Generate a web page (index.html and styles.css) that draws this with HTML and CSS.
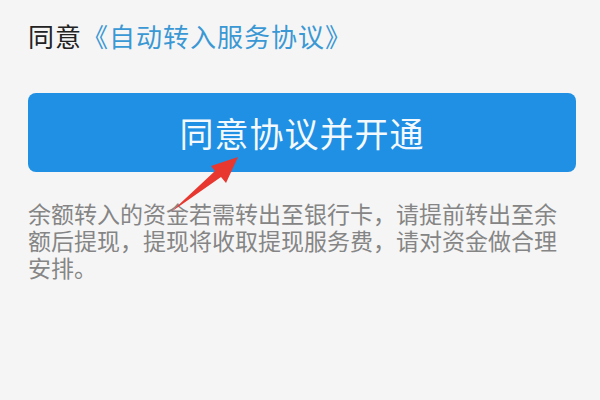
FILE: index.html
```html
<!DOCTYPE html>
<html lang="zh-CN">
<head>
  <meta charset="UTF-8" />
  <title>开通余额转入</title>
  <link rel="stylesheet" href="styles.css">
</head>
<body>

<div class="page">
  <p class="agree">同意<a class="agree-link" href="#">《自动转入服务协议》</a></p>

  <div class="confirm-wrap">
    <button class="confirm">同意协议并开通</button>
    <!-- red pointer onto the button -->
    <svg class="pointer" width="80" height="70" viewBox="160 150 80 70">
      <polygon points="171,212 215,171 211,166 238,157 226,183 221,177" fill="#e8372f" />
    </svg>
  </div>

  <p class="notice">余额转入的资金若需转出至银行卡，请提前转出至余额后提现，提现将收取提现服务费，请对资金做合理安排。</p>
</div>

</body>
</html>
```

FILE: styles.css
```css
* {
  box-sizing: border-box;
}
body {
  margin: 0;
  background-color: #f5f5f5;
  font-family: "Noto Sans CJK SC", "Noto Sans", sans-serif;
  width: 600px;
  height: 400px;
  overflow: hidden;
}
.page {
  padding: 0 24px 0 28px;
}
.agree {
  margin: 0;
  padding-top: 17px;
  font-size: 26px;
  line-height: 38px;
  letter-spacing: 1px;
  color: #222;
}
.agree-link {
  color: #3a98d4;
  text-decoration: none;
}
.confirm-wrap {
  position: relative;
  margin-top: 38px;
}
.confirm {
  display: block;
  width: 100%;
  height: 79px;
  border: none;
  border-radius: 8px;
  background-color: #1f90e3;
  color: #f4f9fd;
  font-family: inherit;
  font-size: 34px;
  letter-spacing: 1px;
  cursor: pointer;
}
.pointer {
  position: absolute;
  left: 132px;
  top: 57px;
}
.notice {
  margin: 0;
  margin-top: 28px;
  font-size: 23px;
  line-height: 27px;
  color: #858585;
}
```
